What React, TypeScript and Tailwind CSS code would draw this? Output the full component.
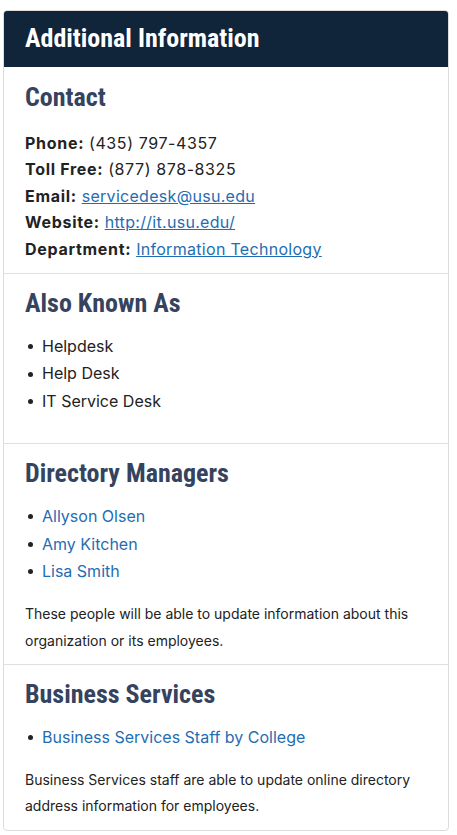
import React from 'react';

const headingFont = { fontFamily: '"Roboto Condensed", "Liberation Sans Narrow", "DejaVu Sans Condensed", Roboto, sans-serif' };

function Bullet({ children }: { children: React.ReactNode }) {
  return (
    <li className="flex items-center leading-[27.4px]">
      <span className="ml-[3px] mr-[9px] h-[5px] w-[5px] rounded-full bg-[#222]" />
      {children}
    </li>
  );
}

function Heading({ children }: { children: React.ReactNode }) {
  return (
    <h2 className="text-[26px] leading-[30px] font-bold text-[#35435f]" style={headingFont}>
      {children}
    </h2>
  );
}

function Label({ children }: { children: React.ReactNode }) {
  return <b className="tracking-[0.7px]">{children}</b>;
}

export default function App() {
  const link = 'text-[#1f6db2]';
  return (
    <div className="min-h-screen bg-white pl-[3px] pt-[10px]" style={{ fontFamily: 'Inter, "Liberation Sans", sans-serif' }}>
      <div className="w-[446px] border border-[#dcdcdc] rounded-[4px] overflow-hidden text-[16px] text-[#222]">
        <div className="h-[57px] -mt-px -mx-px bg-[#10243a] px-[22px] flex items-center">
          <h1 className="text-[26px] font-bold text-white" style={headingFont}>Additional Information</h1>
        </div>

        <section className="px-[21px] pt-[15px] pb-[11px]">
          <Heading>Contact</Heading>
          <div className="mt-[18px] leading-[26.4px] tracking-[0.3px]">
            <p><Label>Phone:</Label> <span className="tracking-[0.6px]">(435) 797-4357</span></p>
            <p><Label>Toll Free:</Label> <span className="tracking-[0.6px]">(877) 878-8325</span></p>
            <p><Label>Email:</Label> <a className={`${link} underline`} href="#">servicedesk@usu.edu</a></p>
            <p><Label>Website:</Label> <a className={`${link} underline`} href="#">http://it.usu.edu/</a></p>
            <p><Label>Department:</Label> <a className={`${link} underline`} href="#">Information Technology</a></p>
          </div>
        </section>

        <section className="border-t border-[#e0e0e0] px-[21px] pt-[14px] pb-[28px]">
          <Heading>Also Known As</Heading>
          <ul className="mt-[15px]">
            <Bullet>Helpdesk</Bullet>
            <Bullet>Help Desk</Bullet>
            <Bullet>IT Service Desk</Bullet>
          </ul>
        </section>

        <section className="border-t border-[#e0e0e0] px-[21px] pt-[14px] pb-[10px]">
          <Heading>Directory Managers</Heading>
          <ul className="mt-[15px]">
            <Bullet><a className={link} href="#">Allyson Olsen</a></Bullet>
            <Bullet><a className={link} href="#">Amy Kitchen</a></Bullet>
            <Bullet><a className={link} href="#">Lisa Smith</a></Bullet>
          </ul>
          <p className="mt-[16px] text-[14px] leading-[26.4px]">
            These people will be able to update information about this organization or its employees.
          </p>
        </section>

        <section className="border-t border-[#e0e0e0] px-[21px] pt-[14px] pb-[10px]">
          <Heading>Business Services</Heading>
          <ul className="mt-[15px]">
            <Bullet><a className={link} href="#">Business Services Staff by College</a></Bullet>
          </ul>
          <p className="mt-[15px] text-[14px] leading-[26.4px]">
            Business Services staff are able to update online directory address information for employees.
          </p>
        </section>
      </div>
    </div>
  );
}
